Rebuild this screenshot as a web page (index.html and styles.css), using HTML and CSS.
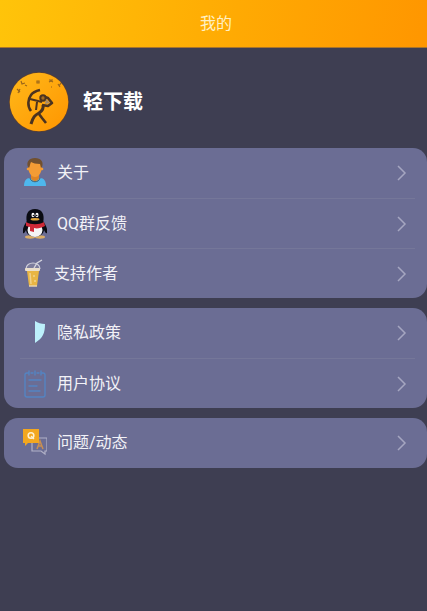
FILE: index.html
```html
<!DOCTYPE html>
<html lang="zh-CN">
<head>
    <meta charset="UTF-8">
    <meta name="viewport" content="width=device-width, initial-scale=1.0">
    <title>我的</title>
    <link rel="stylesheet" href="styles.css">
</head>
<body>

<header>
    <h1>我的</h1>
</header>

<main>
    <!-- 应用信息 -->
    <section class="profile">
        <svg class="avatar" viewBox="0 0 60 60" aria-hidden="true">
            <defs>
                <linearGradient id="sun" x1="0" y1="0" x2="1" y2="1">
                    <stop offset="0" stop-color="#ffb91a"/>
                    <stop offset="1" stop-color="#ff9500"/>
                </linearGradient>
            </defs>
            <circle cx="30" cy="30" r="30" fill="#5e4030"/>
            <circle cx="30" cy="30" r="29.3" fill="url(#sun)"/>
            <path d="M8 17l3 3M11 17l-2 4M12 9l1 3 3-1M16 13l2 1M28 9h2v2h-2zM40 8h4M40 10l2-1 2 1M42 15h1M49 12l2 3M52 11l-2 3" fill="none" stroke="#9c661a" stroke-width="1.2"/>
            <g fill="none" stroke="#4b3320" stroke-width="2.6" stroke-linejoin="round">
                <path d="M31 18c-4 1-7 2-9 5-3 4-4 11 0 16"/>
                <path d="M21 27l12 3" stroke-width="2.2"/>
                <path d="M28 30l-1 8" stroke-width="2"/>
                <circle cx="34" cy="26" r="2.700" fill="#a66d20" stroke-width="2"/>
                <path d="M36 25l3 1 4 5-4 3-6-1"/>
                <path d="M34 33c1 4-1 6-4 8-4 2-6 4-8 11" stroke-width="3"/>
                <path d="M30 42l3 4 4 5"/>
            </g>
            <path d="M37 27l4 4-5 1z" fill="#a48a6c"/>
        </svg>
        <h2>轻下载</h2>
    </section>

    <nav>
        <ul class="menu">
            <li>
                <a href="#about">
                    <svg class="icon" viewBox="0 0 24 30" aria-hidden="true">
                        <path d="M1 28c0-5 2-8 6-8h10c4 0 6 3 6 8z" fill="#4eb7ed"/>
                        <path d="M8 16h8v4c0 4-8 4-8 0z" fill="#de8425"/>
                        <path d="M7 20c1 5 9 5 10 0" fill="none" stroke="#49616b" stroke-width="1"/>
                        <path d="M5 8c0-4 3-6 7-6s7 2 7 6c0 6-3 11-7 11S5 14 5 8z" fill="#f39c35"/>
                        <path d="M5 9C3 4 6 0 12 0s9 4 7 9l-1 1-1-4c-4 0-7-1-9-2-1 2-1 4-2 6z" fill="#71502f"/>
                        <circle cx="5" cy="11" r="1.300" fill="#f39c35"/>
                        <circle cx="19" cy="11" r="1.300" fill="#f39c35"/>
                    </svg>
                    <span>关于</span>
                    <svg class="arrow" viewBox="0 0 10 16" aria-hidden="true"><path d="M1 1l7 7-7 7"/></svg>
                </a>
            </li>
            <li>
                <a href="#feedback">
                    <svg class="icon" viewBox="0 0 24 30" aria-hidden="true">
                        <ellipse cx="7" cy="28" rx="5" ry="1.700" fill="#dcae66"/>
                        <ellipse cx="17" cy="28" rx="5" ry="1.700" fill="#dcae66"/>
                        <path d="M4 12c-3 4-5 9-4 12 1 1 2-1 3-3 1 9 17 9 18 0 1 2 2 4 3 3 1-3-1-8-4-12z" fill="#090b12"/>
                        <ellipse cx="12" cy="21" rx="7.500" ry="7" fill="#f4f4f5"/>
                        <path d="M4 14C2 5 5 0 12 0s10 5 8 14c-3 3-13 3-16 0z" fill="#090b12"/>
                        <ellipse cx="10" cy="6" rx="1.500" ry="2.300" fill="#fff"/>
                        <ellipse cx="14" cy="6" rx="1.500" ry="2.300" fill="#fff"/>
                        <circle cx="10.400" cy="6.500" r=".8" fill="#111"/>
                        <circle cx="13.700" cy="6.500" r=".8" fill="#111"/>
                        <ellipse cx="12" cy="10.300" rx="4.500" ry="1.300" fill="#e0a63b"/>
                        <path d="M3 13c5 3 13 3 18 0l1 4c-4 2-8 3-11 2v4l-4-1v-4l-4-1z" fill="#cf2938"/>
                    </svg>
                    <span>QQ群反馈</span>
                    <svg class="arrow" viewBox="0 0 10 16" aria-hidden="true"><path d="M1 1l7 7-7 7"/></svg>
                </a>
            </li>
            <li>
                <a href="#support">
                    <svg class="icon icon-cup" viewBox="0 0 21 30" aria-hidden="true">
                        <path d="M4 12h12l-2 15H6z" fill="#e8b544"/>
                        <path d="M7 14l1 11" stroke="#f0d18a" stroke-width="1.500"/>
                        <path d="M3 10c0-8 14-8 14 0" fill="#7c7c9c" stroke="#cfcfda" stroke-width="1.200"/>
                        <path d="M11 9l3-5 5-3" fill="none" stroke="#d5d5de" stroke-width="1.400"/>
                        <rect x="2" y="9" width="15" height="3" rx="1" fill="#eadfcb"/>
                        <path d="M6 27h8" stroke="#e9d5ac" stroke-width="1.500"/>
                        <circle cx="11" cy="17" r="1" fill="#f3d589"/>
                        <circle cx="12" cy="22" r="1" fill="#f3d589"/>
                    </svg>
                    <span>支持作者</span>
                    <svg class="arrow" viewBox="0 0 10 16" aria-hidden="true"><path d="M1 1l7 7-7 7"/></svg>
                </a>
            </li>
        </ul>

        <ul class="menu">
            <li>
                <a href="#privacy">
                    <svg class="icon" viewBox="0 0 24 30" aria-hidden="true">
                        <path d="M12 3c3 2 6 3 10 3 0 9-2 14-10 19z" fill="#bcf0fb"/>
                    </svg>
                    <span>隐私政策</span>
                    <svg class="arrow" viewBox="0 0 10 16" aria-hidden="true"><path d="M1 1l7 7-7 7"/></svg>
                </a>
            </li>
            <li>
                <a href="#agreement">
                    <svg class="icon" viewBox="0 0 24 30" aria-hidden="true">
                        <path d="M5 4H4a2 2 0 0 0-2 2v20a2 2 0 0 0 2 2h16a2 2 0 0 0 2-2V6a2 2 0 0 0-2-2h-1M8 4h2M14 4h2M6 2v4M12 2v4M18 2v4M6 11h12M6 17h8M6 22h11" fill="none" stroke="#5484c2" stroke-width="1.400" stroke-linecap="round"/>
                    </svg>
                    <span>用户协议</span>
                    <svg class="arrow" viewBox="0 0 10 16" aria-hidden="true"><path d="M1 1l7 7-7 7"/></svg>
                </a>
            </li>
        </ul>

        <ul class="menu">
            <li>
                <a href="#news">
                    <svg class="icon" viewBox="0 0 24 30" aria-hidden="true">
                        <path d="M9 10h15v13h-2v3l-4-3H9z" fill="none" stroke="#b1b1c7" stroke-width="1.200"/>
                        <path d="M14 21l3-8 3 8M15 18h4" fill="none" stroke="#c98f50" stroke-width="1.500"/>
                        <path d="M0 1h16v14H5l-3 3v-3H0z" fill="#f3a71f"/>
                        <circle cx="8" cy="7.500" r="2.800" fill="none" stroke="#fff0cf" stroke-width="1.600"/>
                        <path d="M8 8l3 3" stroke="#fff0cf" stroke-width="1.300"/>
                    </svg>
                    <span>问题/动态</span>
                    <svg class="arrow" viewBox="0 0 10 16" aria-hidden="true"><path d="M1 1l7 7-7 7"/></svg>
                </a>
            </li>
        </ul>
    </nav>
</main>

</body>
</html>
```

FILE: styles.css
```css
* {
    box-sizing: border-box;
}

body {
    margin: 0;
    font-family: Roboto, 'Noto Sans CJK SC', sans-serif;
    font-size: 16px;
    line-height: 24px;
    background-color: #3e3e52;
    color: #f2f2f7;
}

header {
    display: flex;
    justify-content: center;
    align-items: center;
    height: 48px;
    padding-left: 5px;
    background: linear-gradient(100deg, #ffc40a, #ffaa03 55%, #ff9600);
    border-bottom: 1px solid #a8742c;
}

header h1 {
    margin: 0;
    font-size: 16px;
    font-weight: normal;
    color: #fff0c4;
}

.profile {
    display: flex;
    align-items: center;
    gap: 14px;
    padding: 24px 9px 16px;
}

.avatar {
    width: 60px;
    height: 60px;
}

.profile h2 {
    margin: 0;
    font-size: 20px;
    font-weight: bold;
    color: #fff;
}

/* 菜单卡片 */
.menu {
    list-style: none;
    margin: 0 0 10px 4px;
    padding: 0 12px 0 16px;
    background-color: #6b6d94;
    border-radius: 14px;
}

.menu li {
    height: 50px;
}

.menu li + li {
    border-top: 1px solid #757799;
}

.menu a {
    display: flex;
    align-items: center;
    gap: 10px;
    height: 100%;
    padding: 0 8px 0 3px;
    color: inherit;
    text-decoration: none;
}

.icon {
    width: 24px;
    height: 30px;
}

.icon-cup {
    width: 21px;
}

.arrow {
    width: 10px;
    height: 16px;
    margin-left: auto;
    fill: none;
    stroke: #a5a6c0;
    stroke-width: 1.5;
}
```
